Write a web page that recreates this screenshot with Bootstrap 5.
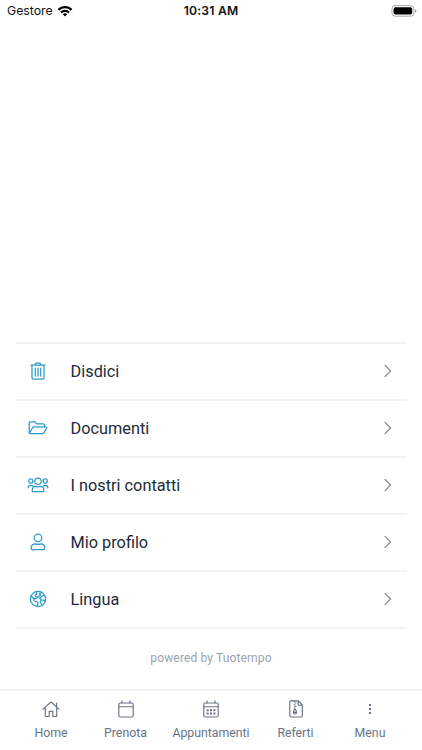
<!DOCTYPE html>
<html lang="it">
<head>
<meta charset="utf-8">
<meta name="viewport" content="width=device-width, initial-scale=1">
<title>Menu</title>
<link rel="stylesheet" href="https://cdn.jsdelivr.net/npm/bootstrap@5.3.0/dist/css/bootstrap.min.css">
<style>
body{font-family:Roboto,sans-serif;height:750px;background:#fff;overflow:hidden}
svg{display:block;fill:none;stroke:currentColor;stroke-linecap:round;stroke-linejoin:round;flex:none}
.status{height:22px;font-family:Inter,sans-serif;font-size:12.3px;line-height:22px;color:#111;padding:0 5px 0 7px}
.status .side{flex:1 1 0}
.status .clock{font-weight:600;font-size:12.2px;letter-spacing:.2px;margin-right:2px}
.menu-list{margin:0 15px 0 16px;border-top:2px solid #f3f3f4}
.menu-list .list-group-item,.menu-list .list-group-item:last-child{height:57px;border:0;border-bottom:2px solid #f3f3f4;padding:0 14px 0 10px;color:#212b39;font-size:16.3px;line-height:24px}
.menu-list .pic{width:24px;height:24px;margin:0 20.6px 1px 0;color:#2b9bc9;stroke-width:1.25}
.chev{color:#858c96;stroke-width:1.25;margin-bottom:1px}
.powered{font-size:12.1px;line-height:18px;color:#9ca3ae;padding:20px 0 22px;letter-spacing:.1px}
.tabs{height:61px;border-top:2px solid #f1f1f2;padding:7px 14px 0;color:#677486;font-size:12.3px}
.tabs a{color:inherit;line-height:16px}
.tabs svg{width:22px;height:22px;margin-bottom:5px;stroke-width:1.15}
.t1{width:74px}.t2{width:75px}.t3{width:96px}.t4{width:73px}.t5{width:76px}
</style>
</head>
<body class="d-flex flex-column">
<header class="status d-flex align-items-center">
  <div class="side d-flex align-items-center"><span>Gestore</span>
    <svg class="ms-1" width="16" height="11" viewBox="0 0 17 12" stroke="none"><path fill="#000" stroke="none" d="M8.5 11.5 6.1 9a3.5 3.5 0 0 1 4.8 0zM3.3 6.2a7.5 7.5 0 0 1 10.4 0L12 8a5 5 0 0 0-7 0zM.5 3.3a11.3 11.3 0 0 1 16 0L14.8 5.1A9.1 9.1 0 0 0 2.2 5.1z"/></svg>
  </div>
  <div class="clock">10:31 AM</div>
  <div class="side d-flex justify-content-end"><svg width="26" height="12" viewBox="0 0 26 12"><rect x="1" y=".6" width="21.8" height="10.6" rx="3" stroke="#aaa" stroke-width="1"/><rect x="2.6" y="2.2" width="18.6" height="7.4" rx="1.8" fill="#000" stroke="none"/><path fill="#999" stroke="none" d="M24 4.2q1.5.5 1.5 1.8T24 7.8z"/></svg></div>
</header>
<main class="mt-auto">
  <div class="list-group list-group-flush menu-list rounded-0">
    <a href="#" class="list-group-item d-flex align-items-center"><svg class="pic" viewBox="0 0 24 24"><path d="M5 6.2h14M9 5.9l1-1.8h4l1 1.8M6 6.5v12.2q0 1.3 1.3 1.3h9.4q1.3 0 1.3-1.3V6.5M9.3 9v8M12 9v8M14.7 9v8"/></svg><span class="flex-grow-1">Disdici</span><svg class="chev" width="10" height="14" viewBox="0 0 10 14"><path d="m2 1.4 5.6 5.6L2 12.6"/></svg></a>
    <a href="#" class="list-group-item d-flex align-items-center"><svg class="pic" viewBox="0 0 24 24"><path d="M3.2 17.2V6.9q0-1 1-1h4.5l2 2h6.6q1.2 0 1.2 1.2v1.7M3.4 17.2l3.2-5.4q.6-.9 1.6-.9h11.6q1.5 0 .8 1.3l-2.7 4.7q-.4.7-1.3.7H4q-.8 0-.6-.4"/></svg><span class="flex-grow-1">Documenti</span><svg class="chev" width="10" height="14" viewBox="0 0 10 14"><path d="m2 1.4 5.6 5.6L2 12.6"/></svg></a>
    <a href="#" class="list-group-item d-flex align-items-center"><svg class="pic" viewBox="0 0 24 24"><circle cx="12" cy="8.2" r="3.2"/><circle cx="4.8" cy="8" r="2.1"/><circle cx="19.2" cy="8" r="2.1"/><path d="M6.3 18.6V17q0-3.6 3.5-3.6 2.2.8 4.4 0 3.5 0 3.5 3.6v1.6zM2.2 14.8q0-2.4 2-2.4h1.2q.8 0 1.2.4M21.8 14.8q0-2.4-2-2.4h-1.2q-.8 0-1.2.4"/></svg><span class="flex-grow-1">I nostri contatti</span><svg class="chev" width="10" height="14" viewBox="0 0 10 14"><path d="m2 1.4 5.6 5.6L2 12.6"/></svg></a>
    <a href="#" class="list-group-item d-flex align-items-center"><svg class="pic" viewBox="0 0 24 24"><circle cx="12" cy="7.8" r="3.8"/><path d="M5.2 18.8V18q0-4.2 4.2-4.2 2.6 1 5.2 0 4.2 0 4.2 4.2v.6q0 1-1 1H6.2q-1 0-1-.8"/></svg><span class="flex-grow-1">Mio profilo</span><svg class="chev" width="10" height="14" viewBox="0 0 10 14"><path d="m2 1.4 5.6 5.6L2 12.6"/></svg></a>
    <a href="#" class="list-group-item d-flex align-items-center"><svg class="pic" viewBox="0 0 24 24"><circle cx="12" cy="12" r="7.6"/><path d="m10.2 4.8.9 2-1.9 1.5.8 1.2 2.5.4 1.9-1.7-.8-1.8 2-1.2M12.5 10l-2.1 1.5H7.6L5 8.6M7.8 11.6l.3 2.4 3.2.8.8 1.8-1.1 2.8M18.3 8.2l-2.6 1.2-2 2.1 1.5 1.6 2.6-.1 1.4 1.2M15 13.2l-.6 1.8 1.8 3.2"/></svg><span class="flex-grow-1">Lingua</span><svg class="chev" width="10" height="14" viewBox="0 0 10 14"><path d="m2 1.4 5.6 5.6L2 12.6"/></svg></a>
  </div>
  <div class="powered text-center">powered by Tuotempo</div>
</main>
<nav class="tabs d-flex">
  <a href="#" class="t1 d-flex flex-column align-items-center text-decoration-none"><svg viewBox="0 0 22 22"><path d="M3 11.1 11 4l8 7.1M5.3 9.3v9.2h3.9v-5.2h3.6v5.2h3.9V9.3M16.6 8.7V5"/></svg>Home</a>
  <a href="#" class="t2 d-flex flex-column align-items-center text-decoration-none"><svg viewBox="0 0 22 22"><rect x="3.8" y="5" width="14.4" height="14" rx="1.5"/><path d="M4 8.7h14M7 5V2.8M15 5V2.8"/></svg>Prenota</a>
  <a href="#" class="t3 d-flex flex-column align-items-center text-decoration-none"><svg viewBox="0 0 22 22"><rect x="3.8" y="5" width="14.4" height="14" rx="1.5"/><path d="M4 8.7h14M7 5V2.8M15 5V2.8"/><path stroke-width="2" stroke-linecap="butt" d="M6.6 12.2h2M10 12.2h2M13.4 12.2h2M6.6 15.6h2M10 15.6h2M13.4 15.6h2"/></svg>Appuntamenti</a>
  <a href="#" class="t4 d-flex flex-column align-items-center text-decoration-none"><svg viewBox="0 0 22 22"><path d="M6 2.8h7.5L17.3 7v10.9q0 1.1-1.1 1.1H6q-1.2 0-1.2-1.2V4Q4.8 2.8 6 2.8M13.2 3v4.2h4M9 3.3h1M10 5h1M9 6.7h1M10 8.4h1M9 10h1"/><path d="m9.4 11.3-1 3.2q0 1.5 1.6 1.5t1.6-1.5l-1-3.2zM9.5 14.4h1"/></svg>Referti</a>
  <a href="#" class="t5 d-flex flex-column align-items-center text-decoration-none"><svg viewBox="0 0 22 22"><path stroke-width="2" stroke-linecap="butt" d="M10 7h2M10 11h2M10 15h2"/></svg>Menu</a>
</nav>
<script src="https://cdn.jsdelivr.net/npm/bootstrap@5.3.0/dist/js/bootstrap.bundle.min.js"></script>
</body>
</html>
